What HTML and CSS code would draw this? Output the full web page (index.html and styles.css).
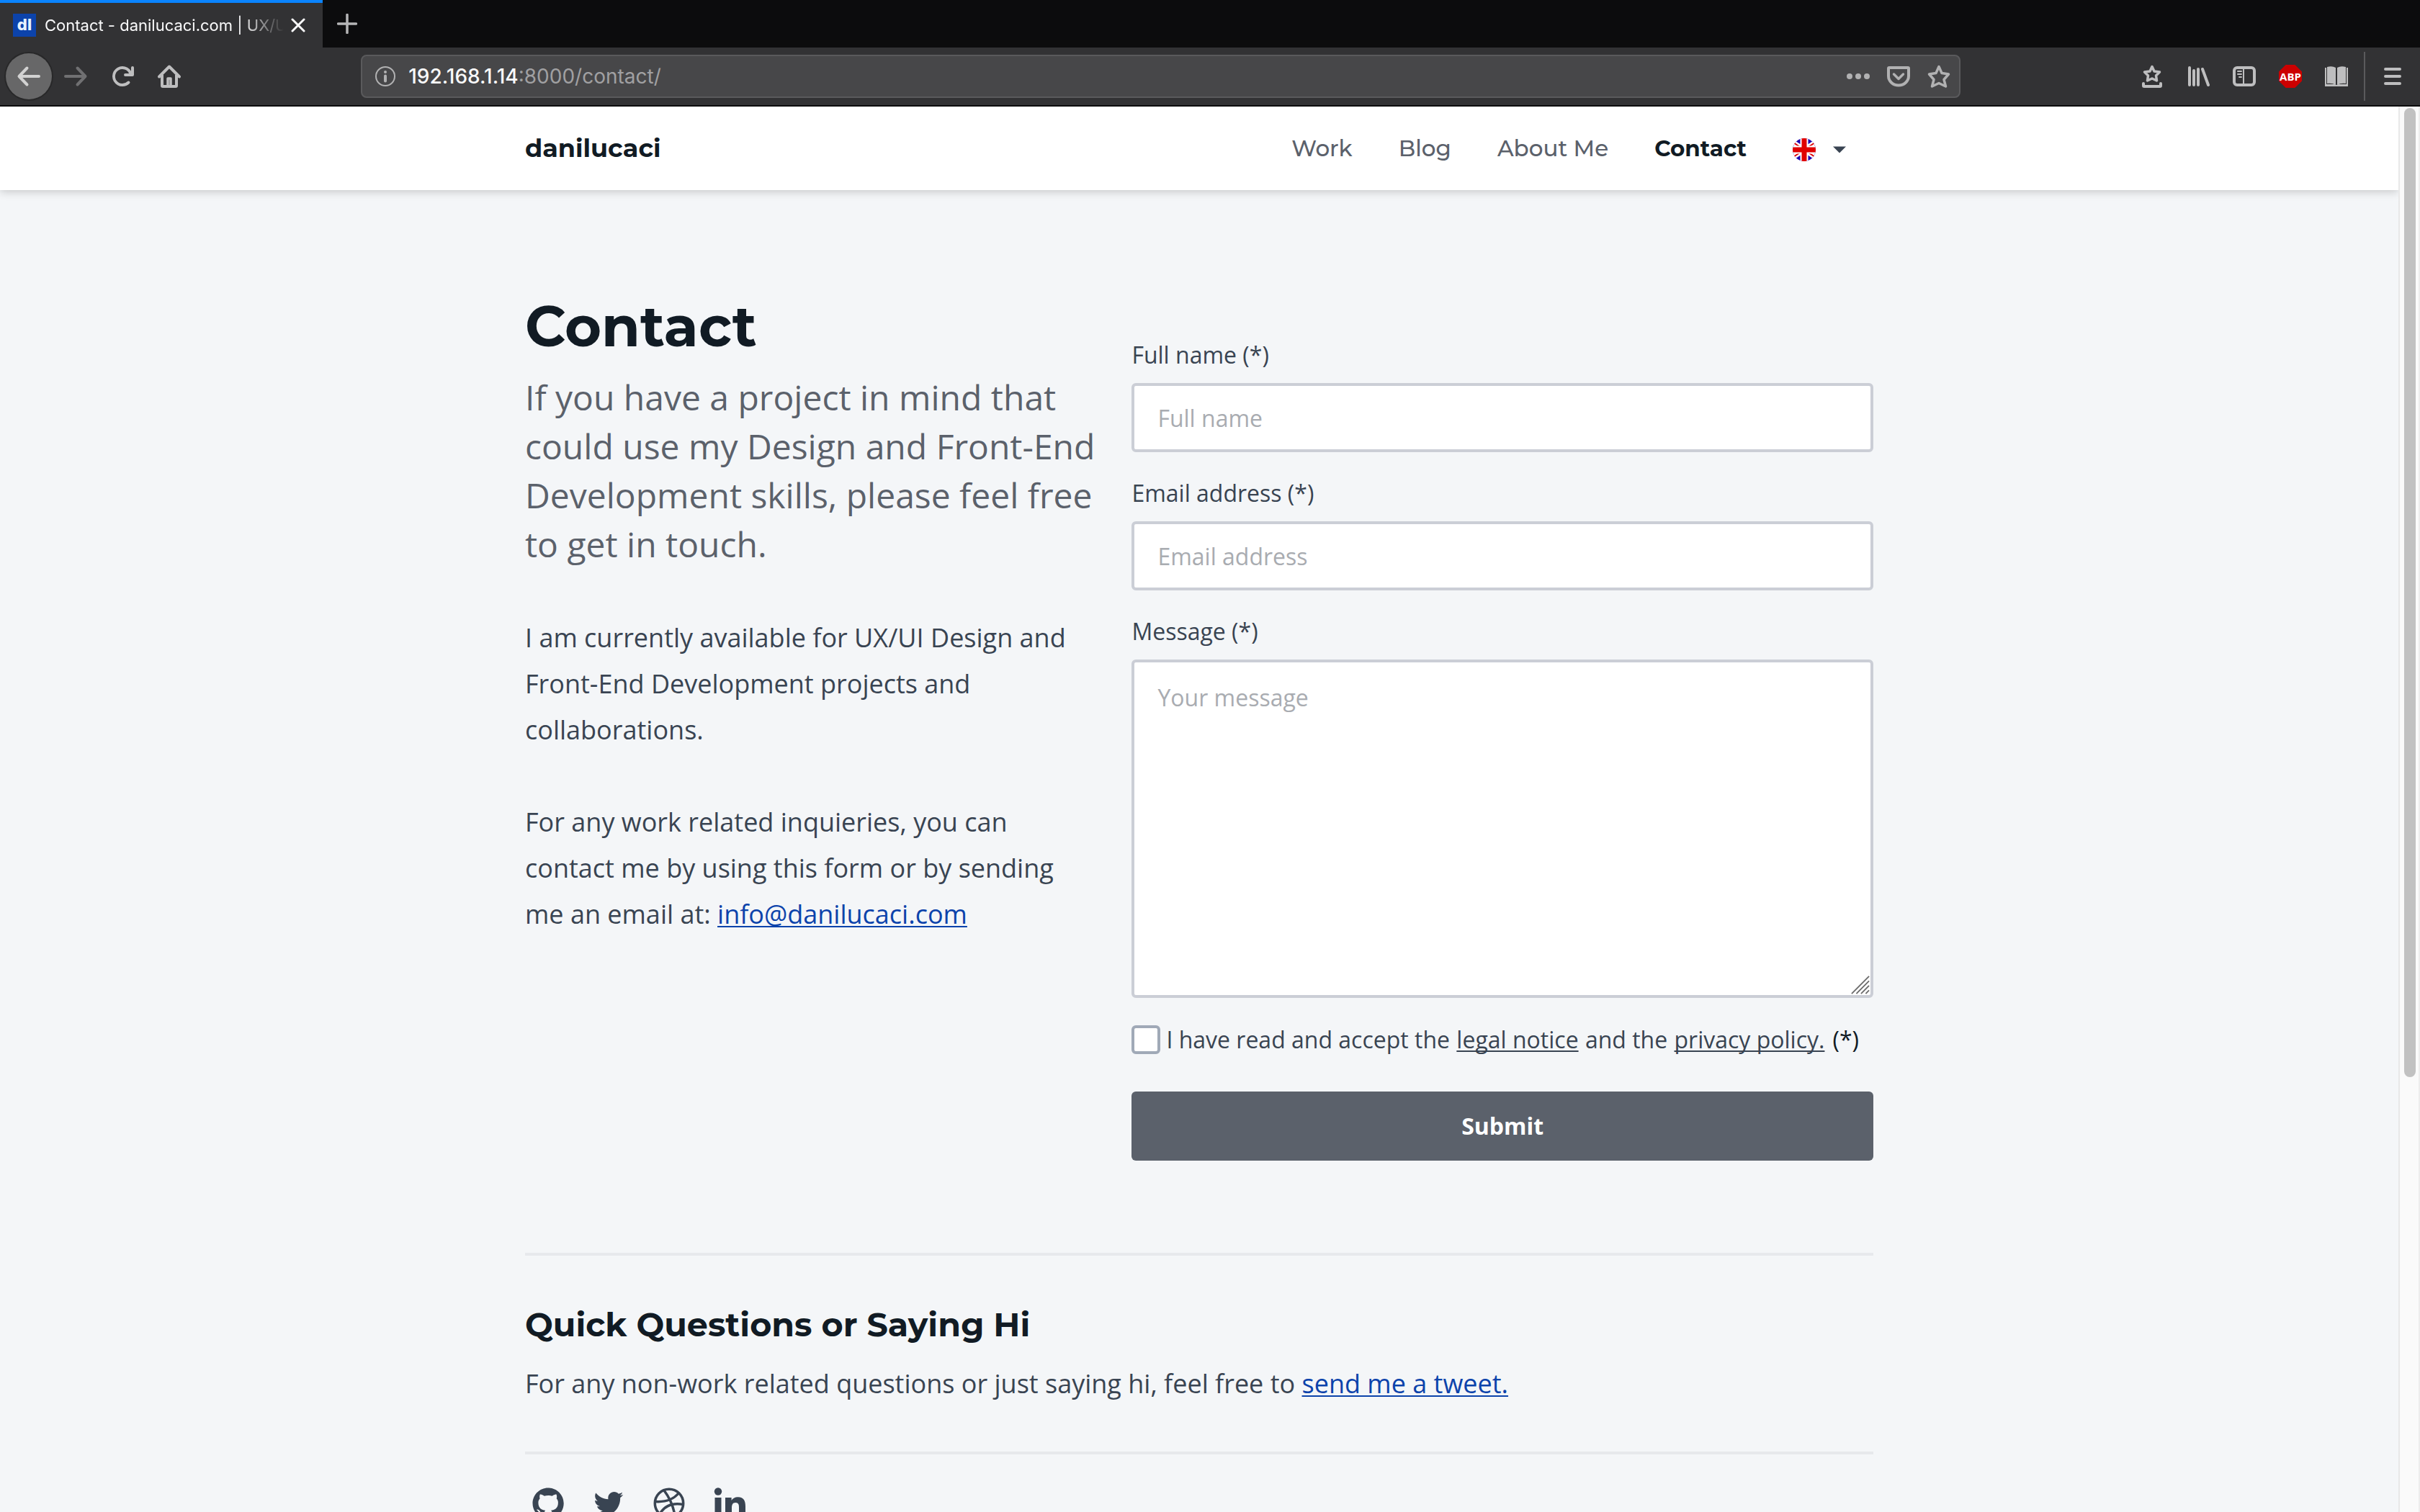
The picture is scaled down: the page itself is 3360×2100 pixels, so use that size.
FILE: index.html
```html
<!DOCTYPE html>
<html lang="en">
<head>
<meta charset="utf-8">
<title>Contact - danilucaci.com | UX/UI</title>
<link rel="stylesheet" href="styles.css">
</head>
<body>
<div class="browser">
  <div class="tabs">
    <div class="tab">
      <span class="favicon">dl</span>
      <span class="tab-title">Contact - danilucaci.com | UX/U</span>
      <button class="tab-close" type="button" aria-label="Close tab">
        <svg width="20" height="20" viewBox="0 0 20 20"><path d="M2 2l16 16M18 2L2 18" stroke="currentColor" stroke-width="3" stroke-linecap="round"/></svg>
      </button>
    </div>
    <button class="tab-new" type="button" aria-label="New tab">
      <svg width="28" height="28" viewBox="0 0 28 28"><path d="M14 1.500v25M1.500 14h25" stroke="currentColor" stroke-width="3.500" stroke-linecap="round"/></svg>
    </button>
  </div>

  <div class="toolbar">
    <div class="tools-left">
      <button class="tool tool-back" type="button" aria-label="Back">
        <svg class="icon" viewBox="0 0 32 32"><path d="M13.500 4.500L2.500 16l11 11.500M3 16h27" fill="none" stroke="currentColor" stroke-width="4" stroke-linecap="round" stroke-linejoin="round"/></svg>
      </button>
      <button class="tool tool-off" type="button" aria-label="Forward">
        <svg class="icon" viewBox="0 0 32 32"><path d="M18.500 4.500l11 11.500-11 11.500M29 16H2" fill="none" stroke="currentColor" stroke-width="4" stroke-linecap="round" stroke-linejoin="round"/></svg>
      </button>
      <button class="tool" type="button" aria-label="Reload">
        <svg class="icon" viewBox="0 0 16 16"><path fill="currentColor" d="M15 1a1 1 0 0 0-1 1v2.418A6.995 6.995 0 1 0 8 15a6.954 6.954 0 0 0 4.950-2.050 1 1 0 0 0-1.414-1.414A5.019 5.019 0 1 1 12.549 6H10a1 1 0 0 0 0 2h5a1 1 0 0 0 1-1V2a1 1 0 0 0-1-1z"/></svg>
      </button>
      <button class="tool" type="button" aria-label="Home">
        <svg class="icon" viewBox="0 0 32 32"><path d="M2 16.500L16 2.500l14 14" fill="none" stroke="currentColor" stroke-width="4" stroke-linecap="round" stroke-linejoin="round"/><path d="M6 14v15q0 1 1 1h18q1 0 1-1V14" fill="none" stroke="currentColor" stroke-width="4"/><path d="M14 30V19h4v11" fill="none" stroke="currentColor" stroke-width="3.500" stroke-linejoin="round"/></svg>
      </button>
    </div>
    <div class="urlbar">
      <svg class="icon" viewBox="0 0 32 32"><circle cx="16" cy="16" r="13" fill="none" stroke="currentColor" stroke-width="2"/><circle cx="16" cy="10" r="2" fill="currentColor"/><path d="M16 15.500v7" stroke="currentColor" stroke-width="4" stroke-linecap="round"/></svg>
      <div class="url"><span class="url-host">192.168.1.14</span>:8000/contact/</div>
      <button class="url-action" type="button" aria-label="Page actions">
        <svg class="icon" viewBox="0 0 32 32"><g fill="currentColor"><circle cx="4" cy="16" r="4"/><circle cx="16" cy="16" r="4"/><circle cx="28" cy="16" r="4"/></g></svg>
      </button>
      <button class="url-action" type="button" aria-label="Save to Pocket">
        <svg class="icon" viewBox="0 0 32 32"><g fill="none" stroke="currentColor" stroke-width="4" stroke-linecap="round" stroke-linejoin="round"><path d="M3 4h26q1 0 1 1v10.500a14 13 0 0 1-28 0V5q0-1 1-1z"/><path d="M9.500 13l6.500 6.500 6.500-6.500" stroke-width="3.500"/></g></svg>
      </button>
      <button class="url-action" type="button" aria-label="Bookmark this page">
        <svg class="icon" viewBox="0 0 32 32"><path d="M16 2.500l4 9 9.500 1.500-6.500 7.500 2.500 9.500-9.500-4.500L6.500 30 9 20.500 2.500 13l9.500-1.500z" fill="none" stroke="currentColor" stroke-width="3.500" stroke-linejoin="round"/></svg>
      </button>
    </div>
    <div class="tools-right">
      <button class="tool" type="button" aria-label="Bookmarks">
        <svg class="icon" viewBox="0 0 32 32"><path d="M16 2.500l3 6.500 7.500 1-5 5 1 7L16 19l-6.500 3 1-7-5-5 7.500-1z" fill="none" stroke="currentColor" stroke-width="3.500" stroke-linejoin="round"/><path d="M4 26v3q0 1 1 1h22q1 0 1-1v-3" fill="none" stroke="currentColor" stroke-width="4" stroke-linecap="round"/></svg>
      </button>
      <button class="tool" type="button" aria-label="Library">
        <svg class="icon" viewBox="0 0 32 32"><path d="M4 4v24M10 8v20M16 6v22M22 6l8 22" stroke="currentColor" stroke-width="4" stroke-linecap="round"/></svg>
      </button>
      <button class="tool" type="button" aria-label="Sidebars">
        <svg class="icon" viewBox="0 0 32 32"><rect x="2" y="4" width="28" height="24" rx="4" fill="none" stroke="currentColor" stroke-width="4"/><path d="M15 4v24M7 9h5M7 13h5M9 17h3" stroke="currentColor" stroke-width="2" stroke-linecap="round"/></svg>
      </button>
      <button class="tool" type="button" aria-label="Adblock Plus"><span class="abp">ABP</span></button>
      <button class="tool" type="button" aria-label="Reader">
        <svg class="icon" viewBox="0 0 32 32"><path d="M0 4h2v23h11l3 1 3-1h11V4h2v26H0z" fill="currentColor"/><path d="M3 3q7-2 12 1v24q-5-3-12-2zM29 3q-7-2-12 1v24q5-3 12-2z" fill="currentColor"/></svg>
      </button>
      <span class="divider"></span>
      <button class="tool" type="button" aria-label="Menu">
        <svg class="icon" viewBox="0 0 32 32"><path d="M6 6h20M6 16h20M6 26h20" stroke="currentColor" stroke-width="4" stroke-linecap="round"/></svg>
      </button>
    </div>
  </div>

  <div class="viewport">
    <div class="page">
      <header class="site-header">
        <div class="container header-inner">
          <a class="logo" href="#">danilucaci</a>
          <nav class="nav">
            <a href="#">Work</a>
            <a href="#">Blog</a>
            <a href="#">About Me</a>
            <a class="current" href="#" aria-current="page">Contact</a>
            <button class="lang" type="button" aria-label="Language: English">
              <svg class="icon" viewBox="0 0 32 32"><defs><clipPath id="round"><circle cx="16" cy="16" r="16"/></clipPath></defs><g clip-path="url(#round)"><path fill="#1c00b0" d="M0 0h32v32H0z"/><path d="M-2 4L34 28M-2 28L34 4" stroke="#fff" stroke-width="7"/><path d="M-2 4L34 28M-2 28L34 4" stroke="#e00000" stroke-width="2"/><path d="M16 0v32M0 16h32" stroke="#fff" stroke-width="11"/><path d="M16 0v32M0 16h32" stroke="#e00000" stroke-width="7"/></g></svg>
              <svg class="caret" viewBox="0 0 20 10"><path fill="#394452" d="M0 0h20L10 10z"/></svg>
            </button>
          </nav>
        </div>
      </header>

      <main class="container">
        <section class="contact">
          <div class="intro">
            <h1>Contact</h1>
            <p class="lead">If you have a project in mind that could use my Design and Front-End Development skills, please feel free to get in touch.</p>
            <p>I am currently available for UX/UI Design and Front-End Development projects and collaborations.</p>
            <p>For any work related inquieries, you can contact me by using this form or by sending me an email at: <a href="mailto:info@danilucaci.com">info@danilucaci.com</a></p>
          </div>
          <form class="form">
            <div class="field">
              <label for="name">Full name (*)</label>
              <input id="name" type="text" placeholder="Full name">
            </div>
            <div class="field">
              <label for="email">Email address (*)</label>
              <input id="email" type="email" placeholder="Email address">
            </div>
            <div class="field">
              <label for="message">Message (*)</label>
              <div class="message-box">
                <textarea id="message" placeholder="Your message"></textarea>
                <svg class="grip" viewBox="0 0 28 28"><path d="M1 27L27 1M8 27L27 8M15 27L27 15M22 27l5-5" stroke="#6c6c6c" stroke-width="2"/></svg>
              </div>
            </div>
            <div class="consent">
              <input id="accept" type="checkbox">
              <label for="accept">I have read and accept the <a href="#">legal notice</a> and the <a href="#">privacy policy.</a></label>
              <span class="required">(*)</span>
            </div>
            <button class="submit" type="submit">Submit</button>
          </form>
        </section>

        <section class="questions">
          <h2>Quick Questions or Saying Hi</h2>
          <p>For any non-work related questions or just saying hi, feel free to <a href="#">send me a tweet.</a></p>
        </section>

        <footer class="social">
          <a href="#" aria-label="GitHub"><svg viewBox="0 0 64 64"><path transform="translate(10.500 10.500) scale(2.700)" d="M8 0C3.580 0 0 3.580 0 8c0 3.540 2.290 6.530 5.470 7.590.4.070.55-.17.55-.38 0-.19-.01-.82-.01-1.490-2.010.37-2.530-.49-2.690-.94-.09-.23-.48-.94-.82-1.130-.28-.15-.68-.52-.01-.53.63-.01 1.080.58 1.230.82.72 1.210 1.870.87 2.330.66.07-.52.28-.87.51-1.070-1.780-.2-3.640-.89-3.640-3.950 0-.87.31-1.590.82-2.150-.08-.2-.36-1.020.08-2.120 0 0 .67-.21 2.200.82.64-.18 1.320-.27 2-.27s1.360.09 2 .27c1.530-1.040 2.200-.82 2.200-.82.44 1.100.16 1.920.08 2.120.51.56.82 1.270.82 2.150 0 3.070-1.870 3.750-3.650 3.950.29.25.54.73.54 1.480 0 1.070-.01 1.930-.01 2.200 0 .21.15.46.55.38A8.010 8.010 0 0 0 16 8c0-4.420-3.580-8-8-8z"/></svg></a>
          <a href="#" aria-label="Twitter"><svg viewBox="0 0 64 64"><path transform="translate(11.500 12.200) scale(1.700)" d="M23.954 4.569c-.885.389-1.830.654-2.825.775 1.014-.611 1.794-1.574 2.163-2.723-.951.555-2.005.959-3.127 1.184-.896-.959-2.173-1.559-3.591-1.559-2.717 0-4.920 2.203-4.920 4.917 0 .39.045.765.127 1.124C7.691 8.094 4.066 6.130 1.640 3.161c-.427.722-.666 1.561-.666 2.475 0 1.710.87 3.213 2.188 4.096-.807-.026-1.566-.248-2.228-.616v.061c0 2.385 1.693 4.374 3.946 4.827-.413.111-.849.171-1.296.171-.314 0-.615-.03-.916-.086.631 1.953 2.445 3.377 4.604 3.417-1.680 1.319-3.809 2.105-6.102 2.105-.39 0-.779-.023-1.170-.067 2.189 1.394 4.768 2.209 7.557 2.209 9.054 0 13.999-7.496 13.999-13.986 0-.209 0-.42-.015-.63.961-.689 1.800-1.560 2.460-2.548l-.047-.02z"/></svg></a>
          <a href="#" aria-label="Dribbble"><svg viewBox="0 0 64 64"><g fill="none" stroke="currentColor" stroke-width="3.500"><circle cx="32" cy="32" r="19.700"/><path d="M25 14q12 16 15 35M12.500 29.500q22 1.500 33-12M51.500 33.500q-22-4-32 12.500"/></g></svg></a>
          <a href="#" aria-label="LinkedIn"><svg viewBox="0 0 64 64"><circle cx="16" cy="15.500" r="5.200"/><path d="M11.500 24h9v29h-9zM26 24h8.600v4c1.500-2.600 4.500-4.700 8.800-4.700 8.600 0 10.600 5.700 10.600 13.200V53h-9V38.500c0-3.500 0-7.500-4.600-7.500S35 34.600 35 38.300V53h-9z"/></svg></a>
        </footer>
      </main>
    </div>
    <div class="scrollbar"><div class="thumb"></div></div>
  </div>
</div>
</body>
</html>
```
FILE: styles.css
```css
* { box-sizing: border-box; }

body {
  margin: 0;
  font-family: "Open Sans", sans-serif;
  font-size: 36px;
  line-height: 64px;
  color: #394452;
}

h1, h2, p { margin: 0; }

button {
  padding: 0;
  border: 0;
  background: none;
  color: inherit;
  font: inherit;
}

svg { display: block; }

.icon { width: 32px; height: 32px; flex: none; overflow: visible; }

/* Browser frame */
.browser {
  display: flex;
  flex-direction: column;
  height: 100vh;
  overflow: hidden;
}

.tabs {
  display: flex;
  height: 66px;
  flex: none;
  background: #0c0c0d;
  font-family: Inter, sans-serif;
}

.tab {
  display: flex;
  align-items: center;
  width: 448px;
  padding: 0 24px 0 18px;
  border-top: 4px solid #0a84ff;
  background: #323234;
  color: #f9f9fa;
}

.favicon {
  width: 32px;
  height: 32px;
  margin-right: 12px;
  background: #0c43ab;
  color: #e6f2ff;
  font-size: 22px;
  font-weight: 800;
  line-height: 30px;
  text-align: center;
}

.tab-title {
  flex: 1;
  overflow: hidden;
  margin-right: 10px;
  font-size: 22px;
  line-height: 32px;
  white-space: nowrap;
  -webkit-mask-image: linear-gradient(to right, #000 82%, transparent);
  mask-image: linear-gradient(to right, #000 82%, transparent);
}

.tab-new { margin-left: 20px; color: #b5b5b6; }

.toolbar {
  display: flex;
  align-items: center;
  height: 82px;
  flex: none;
  padding: 0 6px 0 8px;
  border-bottom: 2px solid #0c0c0d;
  background: #323234;
  color: #bebebf;
}

.tools-left, .tools-right { display: flex; align-items: center; }
.tools-left { gap: 1px; }

.tool {
  display: flex;
  align-items: center;
  justify-content: center;
  width: 64px;
  height: 64px;
}

.tool-back { border-radius: 50%; background: #676768; box-shadow: 0 0 0 2px #282829; color: #d2d2d2; }
.tool-off { color: #707072; }

.urlbar {
  display: flex;
  align-items: center;
  flex: 1;
  height: 60px;
  margin: 0 7%;
  padding: 0 12px 0 16px;
  border: 2px solid #5a5a5c;
  border-radius: 8px;
  background: #474749;
  color: #b1b1b2;
}

.url {
  flex: 1;
  margin-left: 16px;
  font-family: Inter, sans-serif;
  font-size: 28px;
  line-height: 40px;
  color: #a0a0a2;
}

.url-host { color: #f9f9fa; font-weight: 500; }
.url-action { margin-left: 24px; }

.abp {
  width: 32px;
  height: 32px;
  background: #cc0000;
  clip-path: polygon(30% 0, 70% 0, 100% 30%, 100% 70%, 70% 100%, 30% 100%, 0 70%, 0 30%);
  color: #fff;
  font-size: 15px;
  font-weight: 700;
  line-height: 32px;
  text-align: center;
}

.divider { width: 2px; height: 68px; margin: 0 6px; background: #5a5a5c; }

.viewport { display: flex; flex: 1; min-height: 0; }

.page { flex: 1; overflow: hidden; background: #f4f6f8; }

.scrollbar {
  width: 30px;
  padding: 2px 4px 0 6px;
  border-left: 2px solid #e8e8e8;
  border-right: 2px solid #ededed;
  background: #fafafa;
}

.thumb { width: 16px; height: 69%; border-radius: 8px; background: #c1c1c1; }

/* Site */
.container { max-width: 1872px; margin: 0 auto; }

.site-header {
  background: #fff;
  box-shadow: 0 2px 12px rgba(0, 0, 0, 0.2);
}

.header-inner {
  display: flex;
  align-items: center;
  justify-content: space-between;
  height: 116px;
  padding-right: 38px;
  font-family: Montserrat, Inter, sans-serif;
}

.logo { color: #111b24; font-size: 35px; font-weight: 700; text-decoration: none; }

.nav { display: flex; align-items: center; gap: 64px; font-size: 31px; font-weight: 500; }
.nav a { color: #5b616b; text-decoration: none; }
.nav .current { color: #111b24; font-weight: 700; }

.lang { display: flex; align-items: center; gap: 24px; padding-top: 3px; }
.caret { width: 18px; height: 10px; }

.contact {
  display: grid;
  grid-template-columns: 45fr 55fr;
  padding: 140px 0 128px;
  border-bottom: 4px solid #e7e9ec;
}

.intro { display: flex; flex-direction: column; gap: 64px; padding-right: 46px; }

h1, h2 { font-family: Montserrat, Inter, sans-serif; color: #111b24; }
h1 { margin-bottom: -48px; font-size: 78px; font-weight: 700; line-height: 98px; }
h2 { margin-bottom: 18px; font-size: 46px; font-weight: 700; line-height: 64px; }

.lead { font-size: 48px; line-height: 68px; color: #5b616b; }

a { color: #0c43ab; }

p a, .consent a {
  text-decoration-thickness: 2px;
  text-underline-offset: 3px;
  text-decoration-skip-ink: none;
}

.form { display: flex; flex-direction: column; gap: 28px; padding-top: 60px; font-size: 32px; }

.field { display: flex; flex-direction: column; gap: 10px; line-height: 58px; }

.field input, textarea {
  display: block;
  width: 100%;
  height: 96px;
  padding: 0 32px;
  border: 4px solid #cbced6;
  border-radius: 6px;
  background: #fff;
  color: #394452;
  font: inherit;
}

.field textarea { height: 470px; padding: 24px 32px; line-height: 50px; resize: none; }

::placeholder { color: #a9acb1; opacity: 1; }

.message-box { position: relative; }
.grip { position: absolute; right: 5px; bottom: 5px; width: 26px; height: 26px; }

.consent { display: flex; align-items: center; height: 60px; margin-bottom: 14px; }
.consent a { padding: 0 1px; color: inherit; }
.consent input {
  width: 40px;
  height: 40px;
  margin: 0 8px 0 0;
  border: 4px solid #a0a9b7;
  border-radius: 6px;
  background: #fff;
  appearance: none;
}
.required { margin-left: 10px; color: #111b24; }

.submit {
  height: 96px;
  border-radius: 6px;
  background: #5b616b;
  color: #fff;
  font-weight: 700;
}

.questions { padding: 64px 0 62px; border-bottom: 4px solid #e7e9ec; }

.social { display: flex; gap: 20px; padding: 36px 0 64px; }
.social a { color: #394452; }
.social svg { width: 64px; height: 64px; fill: currentColor; }
```
